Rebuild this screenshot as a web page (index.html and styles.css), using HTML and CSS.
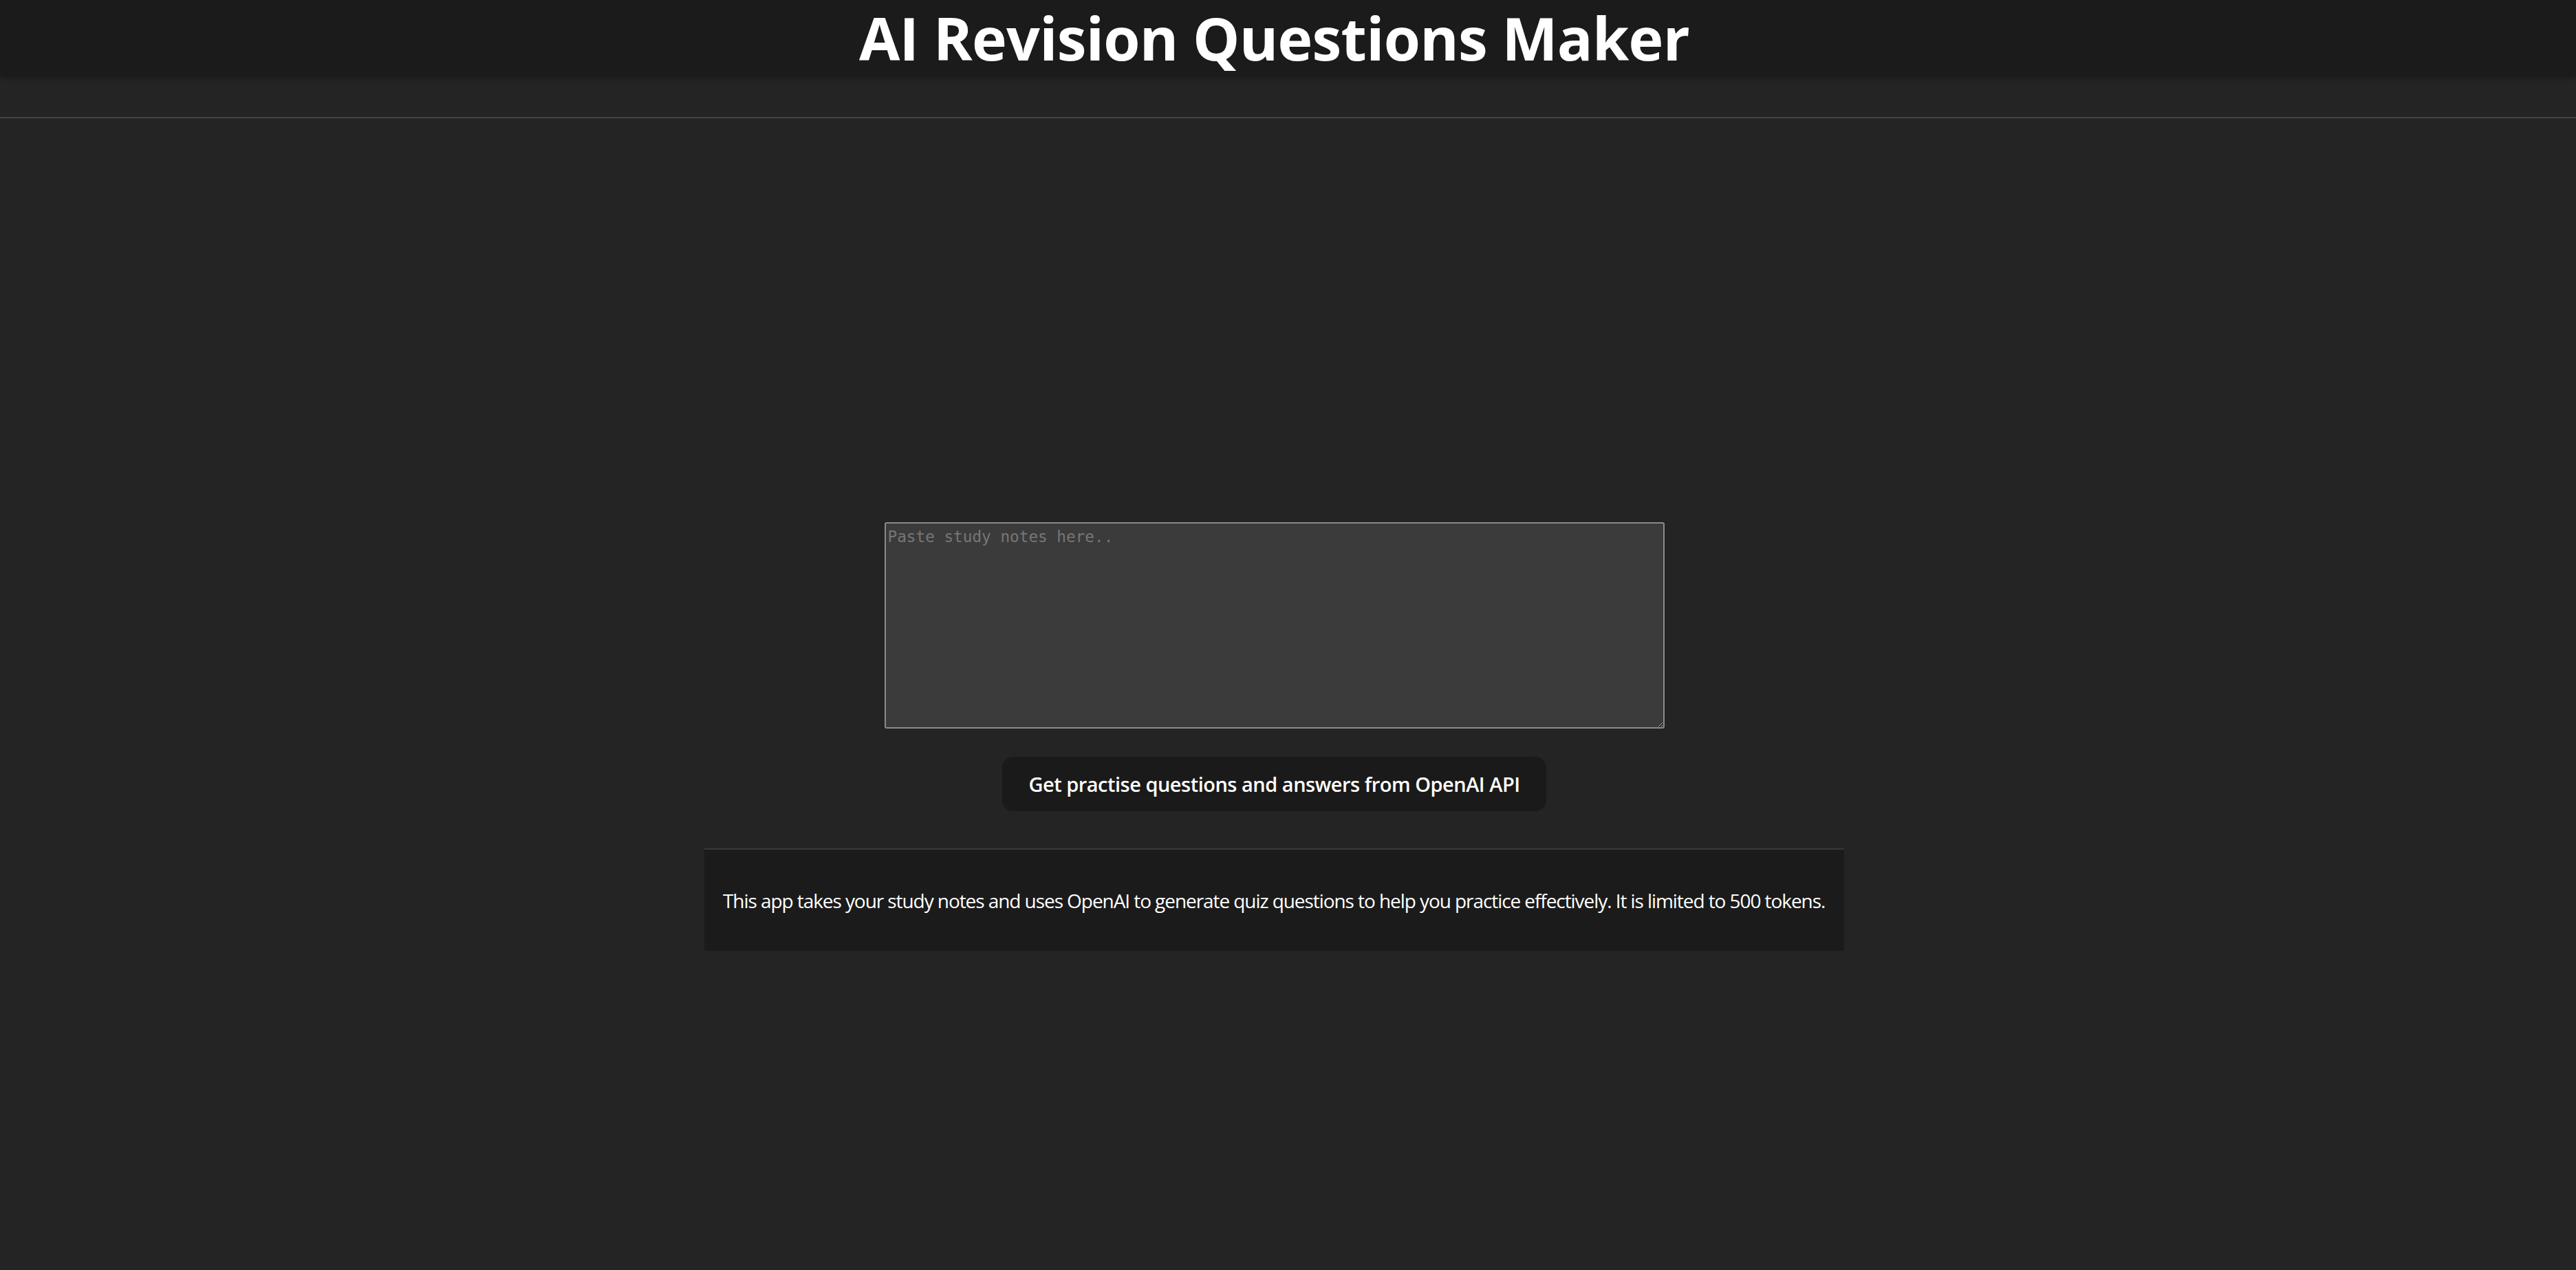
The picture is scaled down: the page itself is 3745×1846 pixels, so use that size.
FILE: index.html
```html
<!DOCTYPE html>
<html lang="en">
<head>
<meta charset="utf-8">
<title>AI Revision Questions Maker</title>
<link rel="stylesheet" href="styles.css">
</head>
<body>
<header class="topbar">
  <h1 class="title">AI Revision Questions Maker</h1>
</header>
<div class="subbar"></div>
<main class="main">
  <textarea class="notes" placeholder="Paste study notes here.."></textarea>
  <button class="submit" type="button">Get practise questions and answers from OpenAI API</button>
  <section class="info">
    <p class="info-text">This app takes your study notes and uses OpenAI to generate quiz questions to help you practice effectively. It is limited to 500 tokens.</p>
  </section>
</main>
</body>
</html>
```

FILE: styles.css
```css
* { box-sizing: border-box; }
html, body { margin: 0; padding: 0; }
body {
  background: #242424;
  color: #ffffff;
  font-family: "Open Sans", "Noto Sans", sans-serif;
  min-height: 100vh;
  padding-right: 40px;
}
.topbar {
  height: 110px;
  background: #1b1b1b;
  margin-right: -40px;
  padding-right: 40px;
  box-shadow: 0 4px 6px rgba(0,0,0,0.25);
  display: flex;
  justify-content: center;
  align-items: center;
  position: relative;
}
.title {
  margin: 0;
  font-size: 86px;
  font-weight: 700;
  line-height: 1;
  letter-spacing: -0.75px;
}
.subbar {
  height: 62px;
  border-bottom: 2px solid #444444;
  margin-right: -40px;
}
.main {
  display: flex;
  flex-direction: column;
  align-items: center;
  padding-top: 587px;
}
.notes {
  width: 1134px;
  height: 300px;
  background: #3b3b3b;
  border: 2px solid #8a8a8a;
  border-radius: 3px;
  padding: 6px 3px;
  color: #ddd;
  font-family: "DejaVu Sans Mono", monospace;
  font-size: 22.7px;
}
.notes::placeholder { color: #767676; }
.submit {
  margin-top: 41px;
  background: #1a1a1a;
  color: #fff;
  border: 2px solid transparent;
  border-radius: 16px;
  padding: 18px 36px;
  font-family: inherit;
  font-size: 29px;
  letter-spacing: -0.5px;
  font-weight: 600;
  cursor: pointer;
}
.info {
  margin-top: 54px;
  width: 1657px;
  height: 149px;
  background: #1b1b1b;
  border-top: 2px solid #393939;
  display: flex;
  align-items: center;
  padding: 0 27px;
}
.info-text {
  margin: 0;
  font-size: 28px;
  letter-spacing: -1.07px;
  line-height: 1.5;
  white-space: nowrap;
}
```
